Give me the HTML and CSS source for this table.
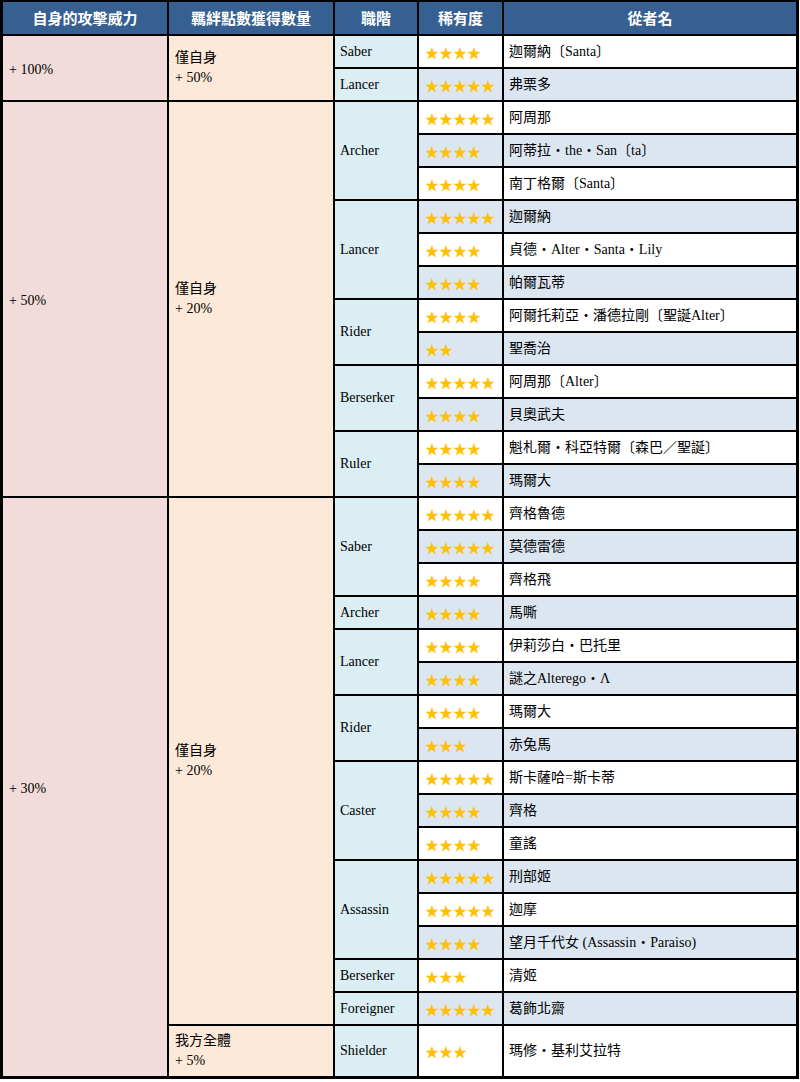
FILE: index.html
```html
<!DOCTYPE html>
<html lang="zh-Hant">
<head>
<meta charset="utf-8">
<title>從者表</title>
<link rel="stylesheet" href="styles.css">
</head>
<body>
<table class="grid">
  <thead>
    <tr class="head">
      <th class="w1">自身的攻擊威力</th>
      <th class="w2">羈絆點數獲得數量</th>
      <th class="w3">職階</th>
      <th class="w4">稀有度</th>
      <th class="w5">從者名</th>
    </tr>
  </thead>
  <tbody>
    <tr class="odd">
      <td class="atk" rowspan="2">+ 100%</td>
      <td class="bond" rowspan="2">僅自身<br>+ 50%</td>
      <td class="cls">Saber</td>
      <td class="rar">★★★★</td>
      <td class="nm">迦爾納〔Santa〕</td>
    </tr>
    <tr class="even">
      <td class="cls">Lancer</td>
      <td class="rar">★★★★★</td>
      <td class="nm">弗栗多</td>
    </tr>

    <tr class="odd">
      <td class="atk" rowspan="12">+ 50%</td>
      <td class="bond" rowspan="12">僅自身<br>+ 20%</td>
      <td class="cls" rowspan="3">Archer</td>
      <td class="rar">★★★★★</td>
      <td class="nm">阿周那</td>
    </tr>
    <tr class="even"><td class="rar">★★★★</td><td class="nm">阿蒂拉・the・San〔ta〕</td></tr>
    <tr class="odd"><td class="rar">★★★★</td><td class="nm">南丁格爾〔Santa〕</td></tr>
    <tr class="even"><td class="cls" rowspan="3">Lancer</td><td class="rar">★★★★★</td><td class="nm">迦爾納</td></tr>
    <tr class="odd"><td class="rar">★★★★</td><td class="nm">貞德・Alter・Santa・Lily</td></tr>
    <tr class="even"><td class="rar">★★★★</td><td class="nm">帕爾瓦蒂</td></tr>
    <tr class="odd"><td class="cls" rowspan="2">Rider</td><td class="rar">★★★★</td><td class="nm">阿爾托莉亞・潘德拉剛〔聖誕Alter〕</td></tr>
    <tr class="even"><td class="rar">★★</td><td class="nm">聖喬治</td></tr>
    <tr class="odd"><td class="cls" rowspan="2">Berserker</td><td class="rar">★★★★★</td><td class="nm">阿周那〔Alter〕</td></tr>
    <tr class="even"><td class="rar">★★★★</td><td class="nm">貝奧武夫</td></tr>
    <tr class="odd"><td class="cls" rowspan="2">Ruler</td><td class="rar">★★★★</td><td class="nm">魁札爾・科亞特爾〔森巴／聖誕〕</td></tr>
    <tr class="even"><td class="rar">★★★★</td><td class="nm">瑪爾大</td></tr>

    <tr class="odd">
      <td class="atk" rowspan="17">+ 30%</td>
      <td class="bond" rowspan="16">僅自身<br>+ 20%</td>
      <td class="cls" rowspan="3">Saber</td>
      <td class="rar">★★★★★</td>
      <td class="nm">齊格魯德</td>
    </tr>
    <tr class="even"><td class="rar">★★★★★</td><td class="nm">莫德雷德</td></tr>
    <tr class="odd"><td class="rar">★★★★</td><td class="nm">齊格飛</td></tr>
    <tr class="even"><td class="cls">Archer</td><td class="rar">★★★★</td><td class="nm">馬嘶</td></tr>
    <tr class="odd"><td class="cls" rowspan="2">Lancer</td><td class="rar">★★★★</td><td class="nm">伊莉莎白・巴托里</td></tr>
    <tr class="even"><td class="rar">★★★★</td><td class="nm">謎之Alterego・Λ</td></tr>
    <tr class="odd"><td class="cls" rowspan="2">Rider</td><td class="rar">★★★★</td><td class="nm">瑪爾大</td></tr>
    <tr class="even"><td class="rar">★★★</td><td class="nm">赤兔馬</td></tr>
    <tr class="odd"><td class="cls" rowspan="3">Caster</td><td class="rar">★★★★★</td><td class="nm">斯卡薩哈=斯卡蒂</td></tr>
    <tr class="even"><td class="rar">★★★★</td><td class="nm">齊格</td></tr>
    <tr class="odd"><td class="rar">★★★★</td><td class="nm">童謠</td></tr>
    <tr class="even"><td class="cls" rowspan="3">Assassin</td><td class="rar">★★★★★</td><td class="nm">刑部姬</td></tr>
    <tr class="odd"><td class="rar">★★★★★</td><td class="nm">迦摩</td></tr>
    <tr class="even"><td class="rar">★★★★</td><td class="nm">望月千代女 (Assassin・Paraiso)</td></tr>
    <tr class="odd"><td class="cls">Berserker</td><td class="rar">★★★</td><td class="nm">清姬</td></tr>
    <tr class="even"><td class="cls">Foreigner</td><td class="rar">★★★★★</td><td class="nm">葛飾北齋</td></tr>
    <tr class="odd tall">
      <td class="bond">我方全體<br>+ 5%</td>
      <td class="cls">Shielder</td>
      <td class="rar">★★★</td>
      <td class="nm">瑪修・基利艾拉特</td>
    </tr>
  </tbody>
</table>
</body>
</html>
```

FILE: styles.css
```css
html, body {
  margin: 0;
  padding: 0;
  background: #ffffff;
}

.grid {
  border-collapse: separate;
  border-spacing: 0;
  border: 2px solid #000;
  border-top-width: 1px;
  table-layout: fixed;
  width: 797px;
  font-family: "Liberation Serif", "Noto Sans CJK TC", serif;
  font-size: 14px;
  color: #000;
}

.grid th,
.grid td {
  box-sizing: border-box;
  border: 1px solid #000;
  padding: 0 5px;
  line-height: 20px;
  vertical-align: middle;
  text-align: left;
}

.grid .head th {
  height: 34px;
  background: #366092;
  color: #ffffff;
  font-family: "Noto Sans CJK TC", "Liberation Sans", sans-serif;
  font-weight: bold;
  font-size: 15px;
  text-align: center;
}

.w1 { width: 166px; }
.w2 { width: 166px; }
.w3 { width: 84px; }
.w4 { width: 85px; }
.w5 { width: 294px; }

.grid tbody tr {
  height: 33px;
}

.grid .atk {
  background: #f2dcdb;
  padding: 4px 5px 0 6px;
}

.grid .bond {
  background: #fde9d9;
  padding: 5px 5px 5px 6px;
}

.grid .cls {
  background: #daeef3;
}

.grid .rar {
  color: #ffc000;
  font-family: "Noto Sans CJK TC", sans-serif;
  padding-left: 6px;
  white-space: nowrap;
}

.grid .nm {
  white-space: nowrap;
}

.odd .rar,
.odd .nm {
  background: #ffffff;
}

.even .rar,
.even .nm {
  background: #dce6f1;
}
```
